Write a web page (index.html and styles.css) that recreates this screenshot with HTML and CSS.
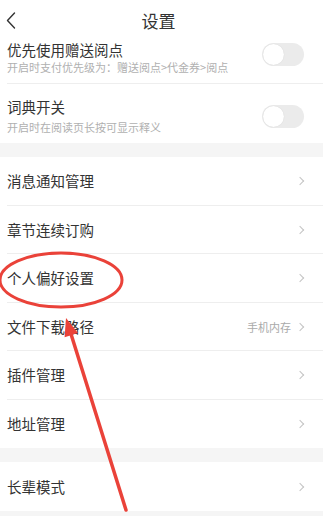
FILE: index.html
```html
<!DOCTYPE html>
<html lang="zh-CN">
<head>
    <meta charset="UTF-8">
    <meta name="viewport" content="width=device-width, initial-scale=1.0">
    <title>设置</title>
    <link rel="stylesheet" href="styles.css">
</head>
<body>
    <div class="screen">
        <header class="topbar">
            <svg class="back" width="10" height="17" viewBox="0 0 10 17">
                <path d="M8.5 1 L1.5 8.5 L8.5 16" fill="none" stroke="#333" stroke-width="1.4" stroke-linecap="round" stroke-linejoin="round"/>
            </svg>
            <h1>设置</h1>
        </header>

        <div class="list">
            <!-- list is scrolled: first row sits right under the bar -->
            <div class="row switch-row scrolled">
                <div class="row-text">
                    <div class="row-title">优先使用赠送阅点</div>
                    <div class="row-sub">开启时支付优先级为：赠送阅点&gt;代金券&gt;阅点</div>
                </div>
                <span class="toggle"><span class="knob"></span></span>
            </div>
            <div class="row switch-row last">
                <div class="row-text">
                    <div class="row-title">词典开关</div>
                    <div class="row-sub">开启时在阅读页长按可显示释义</div>
                </div>
                <span class="toggle"><span class="knob"></span></span>
            </div>

            <div class="gap"></div>

            <div class="row nav-row"><span class="row-title">消息通知管理</span><span class="chev"></span></div>
            <div class="row nav-row"><span class="row-title">章节连续订购</span><span class="chev"></span></div>
            <div class="row nav-row"><span class="row-title">个人偏好设置</span><span class="chev"></span></div>
            <div class="row nav-row"><span class="row-title">文件下载路径</span><span class="row-value">手机内存</span><span class="chev"></span></div>
            <div class="row nav-row"><span class="row-title">插件管理</span><span class="chev"></span></div>
            <div class="row nav-row last"><span class="row-title">地址管理</span><span class="chev"></span></div>

            <div class="gap"></div>

            <div class="row nav-row last"><span class="row-title">长辈模式</span><span class="chev"></span></div>

            <div class="gap"></div>
        </div>

        <!-- red markup drawn over the screenshot -->
        <svg class="markup" width="333" height="516" viewBox="0 0 333 516">
            <ellipse cx="61" cy="280" rx="61" ry="27" fill="none" stroke="#ea4239" stroke-width="3"/>
            <line x1="126" y1="510" x2="71.3" y2="335" stroke="#ea4239" stroke-width="3.5" stroke-linecap="round"/>
            <polygon points="66,318 78,333.1 64.6,337.3" fill="#ea4239"/>
        </svg>
    </div>
</body>
</html>
```

FILE: styles.css
```css
* {
    box-sizing: border-box;
}
html, body {
    margin: 0;
    padding: 0;
    background: #fff;
}
body {
    font-family: "Noto Sans CJK SC", "Noto Sans", sans-serif;
    color: #333;
}
.screen {
    position: relative;
    width: 333px;
    height: 516px;
    overflow: hidden;
    background: #fff;
}
.topbar {
    height: 41px;
    display: flex;
    align-items: center;
    padding: 0 12px 0 6px;
    width: 323px;
    background: #fff;
}
.back {
    flex-shrink: 0;
    display: block;
}
.topbar h1 {
    flex: 1;
    margin: 0;
    padding-right: 10px;
    text-align: center;
    font-size: 17px;
    font-weight: 400;
    line-height: 24px;
    color: #333;
}
.list {
    width: 323px;
    height: 475px;
}
.row {
    display: flex;
    align-items: center;
    margin-left: 7px;
    padding-right: 18px;
    border-bottom: 1px solid #eeeeee;
}
.row.last {
    border-bottom: none;
}
.switch-row {
    padding-top: 13px;
    padding-bottom: 8px;
    padding-right: 19px;
}
.switch-row.scrolled {
    padding-top: 0;
}
.switch-row.scrolled .row-title {
    line-height: 21px;
    margin-top: -2px;
}
.switch-row.scrolled .row-sub {
    margin-top: -1px;
}
.switch-row.scrolled .toggle {
    margin-bottom: 7px;
}
.row-text {
    flex: 1;
}
.row-title {
    font-size: 14.5px;
    line-height: 20px;
    color: #333;
    flex: 1;
}
.row-sub {
    margin-top: 2px;
    font-size: 11px;
    line-height: 16px;
    color: #b0b0b0;
}
.toggle {
    position: relative;
    width: 42px;
    height: 23px;
    border-radius: 12px;
    background: #ebebeb;
    flex-shrink: 0;
}
.knob {
    position: absolute;
    left: 1px;
    top: 1px;
    width: 21px;
    height: 21px;
    border-radius: 50%;
    background: #fff;
    box-shadow: 0 0 1px rgba(0, 0, 0, 0.15);
}
.nav-row {
    height: 48.5px;
    padding-top: 1px;
}
.row-value {
    font-size: 11px;
    color: #aaa;
    margin-right: 6px;
}
.chev {
    width: 6px;
    height: 6px;
    border-top: 1.2px solid #c4c4c4;
    border-right: 1.2px solid #c4c4c4;
    transform: rotate(45deg);
    margin-right: 2px;
    flex-shrink: 0;
}
.gap {
    height: 14px;
    background: #f5f5f5;
}
.markup {
    position: absolute;
    left: 0;
    top: 0;
    pointer-events: none;
}
```
